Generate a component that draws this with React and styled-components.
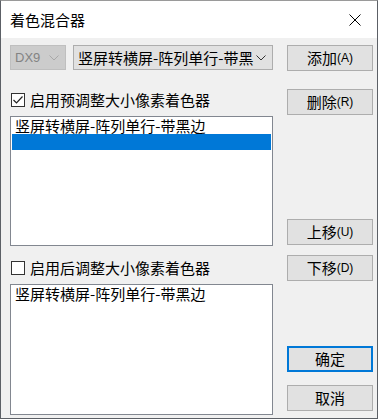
import styled, { createGlobalStyle } from "styled-components";

const GlobalStyle = createGlobalStyle`
  html, body {
    margin: 0;
    padding: 0;
    background: #3a3f46;
  }
  * { box-sizing: border-box; }
`;

const ui = `"Noto Sans CJK SC", "Noto Sans", sans-serif`;

const Window = styled.div`
  width: 378px;
  height: 419px;
  background: #f0f0f0;
  border: 1px solid #5c6066;
  border-top-color: #9a9a9a;
  display: flex;
  flex-direction: column;
  font-family: ${ui};
  color: #000;
`;

const TitleBar = styled.div`
  height: 37px;
  background: #fff;
  display: flex;
  align-items: center;
  justify-content: space-between;
  padding: 0 10px 0 9px;
  font-size: 15px;
  line-height: 15px;
`;

const CloseX = styled.div`
  width: 24px;
  height: 24px;
  display: flex;
  align-items: center;
  justify-content: center;
`;

const Body = styled.div`
  flex: 1;
  display: flex;
  gap: 14px;
  padding: 7px 0 0 9px;
`;

const LeftCol = styled.div`
  width: 263px;
  display: flex;
  flex-direction: column;
`;

const RightCol = styled.div`
  width: 86px;
  display: flex;
  flex-direction: column;
`;

const ComboRow = styled.div`
  display: flex;
  gap: 7px;
  height: 25px;
`;

const Combo = styled.div`
  width: ${(p) => p.$w}px;
  height: 25px;
  display: flex;
  align-items: center;
  justify-content: space-between;
  padding: 0 6px 0 4px;
  border: 1px solid ${(p) => (p.$disabled ? "#bfbfbf" : "#adadad")};
  background: ${(p) => (p.$disabled ? "#cccccc" : "#e1e1e1")};
  color: ${(p) => (p.$disabled ? "#838383" : "#000")};
  font-family: ${(p) => (p.$disabled ? `"Liberation Sans", sans-serif` : ui)};
  font-size: ${(p) => (p.$disabled ? 13 : 15)}px;
  white-space: nowrap;
`;

const ComboText = styled.span`
  line-height: 23px;
`;

const CheckRow = styled.label`
  display: flex;
  align-items: center;
  gap: 5px;
  height: 16px;
  margin-top: ${(p) => p.$mt}px;
  font-size: 15px;
  line-height: 16px;
  padding-left: 1px;
`;

const Box = styled.span`
  width: 14px;
  height: 14px;
  border: 1px solid #333;
  background: #fff;
  display: flex;
  align-items: center;
  justify-content: center;
`;

const List = styled.div`
  margin-top: ${(p) => p.$mt}px;
  height: ${(p) => p.$h}px;
  border: 1px solid #828790;
  background: #fff;
  padding: 1px;
  display: flex;
  flex-direction: column;
`;

const Item = styled.div`
  height: 16px;
  line-height: 16px;
  font-size: 15px;
  padding-left: 3px;
  white-space: nowrap;
  background: ${(p) => (p.$selected ? "#0078d7" : "transparent")};
  color: ${(p) => (p.$selected ? "#fff" : "#000")};
`;

const Button = styled.div`
  height: 26px;
  margin-top: ${(p) => p.$mt || 0}px;
  border: ${(p) => (p.$default ? "2px solid #0078d7" : "1px solid #adadad")};
  background: #e1e1e1;
  display: flex;
  align-items: center;
  justify-content: center;
  font-size: 15px;
  line-height: 16px;
  white-space: nowrap;
`;

const Key = styled.span`
  font-family: "Liberation Sans", sans-serif;
  font-size: 12px;
`;

const Chevron = ({ color }) => (
  <svg width="10" height="6" viewBox="0 0 10 6">
    <path d="M0.5 0.5 L5 5 L9.5 0.5" fill="none" stroke={color} strokeWidth="1" />
  </svg>
);

const Check = () => (
  <svg width="10" height="8" viewBox="0 0 10 8">
    <path d="M0.5 4 L3.5 7 L9.5 0.5" fill="none" stroke="#222" strokeWidth="1.2" />
  </svg>
);

const NAME = "竖屏转横屏-阵列单行-带黑边";

export default function App() {
  return (
    <>
      <GlobalStyle />
      <Window>
        <TitleBar>
          <span>着色混合器</span>
          <CloseX>
            <svg width="12" height="12" viewBox="0 0 12 12">
              <path d="M0.5 0.5 L11.5 11.5 M11.5 0.5 L0.5 11.5" stroke="#000" strokeWidth="1" />
            </svg>
          </CloseX>
        </TitleBar>
        <Body>
          <LeftCol>
            <ComboRow>
              <Combo $w={56} $disabled>
                <ComboText>DX9</ComboText>
                <Chevron color="#a8a8a8" />
              </Combo>
              <Combo $w={200}>
                <ComboText>竖屏转横屏-阵列单行-带黑</ComboText>
                <Chevron color="#333" />
              </Combo>
            </ComboRow>
            <CheckRow $mt={22}>
              <Box>
                <Check />
              </Box>
              启用预调整大小像素着色器
            </CheckRow>
            <List $mt={8} $h={130}>
              <Item>{NAME}</Item>
              <Item $selected />
            </List>
            <CheckRow $mt={14}>
              <Box />
              启用后调整大小像素着色器
            </CheckRow>
            <List $mt={8} $h={131}>
              <Item>{NAME}</Item>
            </List>
          </LeftCol>
          <RightCol>
            <Button>
              添加<Key>(A)</Key>
            </Button>
            <Button $mt={18}>
              删除<Key>(R)</Key>
            </Button>
            <Button $mt={104}>
              上移<Key>(U)</Key>
            </Button>
            <Button $mt={10}>
              下移<Key>(D)</Key>
            </Button>
            <Button $mt={65} $default>
              确定
            </Button>
            <Button $mt={13}>取消</Button>
          </RightCol>
        </Body>
      </Window>
    </>
  );
}
